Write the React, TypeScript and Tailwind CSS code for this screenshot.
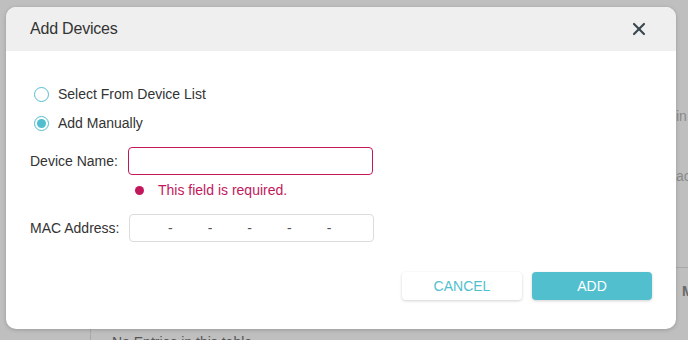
import { X } from "lucide-react";

const font = { fontFamily: '"Liberation Sans", Arial, sans-serif' };

function Radio({ checked, label }: { checked?: boolean; label: string }) {
  return (
    <label className="flex items-center gap-[9px] h-[29px] text-[14px] text-[#333]">
      <span className="w-[15px] h-[15px] rounded-full border border-[#4fbfcf] bg-white flex items-center justify-center">
        {checked && <span className="w-[9px] h-[9px] rounded-full bg-[#4fbfcf]" />}
      </span>
      {label}
    </label>
  );
}

export default function App() {
  return (
    <div className="relative h-[340px] w-[688px] overflow-hidden bg-[#bfbfbf]" style={font}>
      {/* page underneath the overlay */}
      <div className="absolute left-[676px] top-[106px] text-[14px] text-[#8a8a8a]">in</div>
      <div className="absolute left-[676px] top-[166px] text-[14px] text-[#8a8a8a]">ac</div>
      <div className="absolute left-[676px] top-[267px] w-[20px] border-t border-[#a9a9a9]" />
      <div className="absolute left-[682px] top-[281px] text-[14px] font-bold text-[#6a6a6a]">M</div>
      <div className="absolute left-[90px] top-[329px] h-[20px] border-l border-[#a9a9a9]" />
      <div className="absolute left-[112px] top-[332px] text-[14px] text-[#555]">No Entries in this table</div>

      <div className="absolute left-[6px] top-[7px] w-[670px] h-[322px] rounded-[10px] bg-white overflow-hidden shadow-[0_1px_4px_rgba(0,0,0,0.2)]">
        <div className="h-[44px] bg-[#efefef] flex items-center justify-between pl-[24px] pr-[27px]">
          <span className="text-[16px] text-[#333] tracking-[-0.2px]">Add Devices</span>
          <X size={20} strokeWidth={2.6} className="text-[#3a4850]" />
        </div>

        <div className="pl-[24px] pr-[24px] pt-[29px]">
          <div className="pl-[4px]">
            <Radio label="Select From Device List" />
            <Radio checked label="Add Manually" />
          </div>

          <div className="mt-[9px] flex items-center">
            <span className="w-[98px] text-[14px] text-[#333]">Device Name:</span>
            <div className="w-[245px] h-[28px] rounded-[4px] border border-[#c2185b] bg-white" />
          </div>
          <div className="ml-[105px] mt-[5px] flex items-center gap-[14px] text-[14px] text-[#c2185b]">
            <span className="w-[9px] h-[9px] rounded-full bg-[#c2185b]" />
            This field is required.
          </div>

          <div className="mt-[13px] flex items-center">
            <span className="w-[99px] text-[14px] text-[#333]">MAC Address:</span>
            <div className="w-[245px] h-[28px] rounded-[4px] border border-[#dcdcdc] bg-white flex items-center pl-[38px] gap-[35px] text-[14px] text-[#555]">
              <span>-</span>
              <span>-</span>
              <span>-</span>
              <span>-</span>
              <span>-</span>
            </div>
          </div>

          <div className="mt-[30px] flex justify-end gap-[10px]">
            <button className="w-[120px] h-[28px] rounded-[4px] bg-white text-[14px] text-[#52bfcf] shadow-[0_1px_3px_rgba(0,0,0,0.18)]">
              CANCEL
            </button>
            <button className="w-[120px] h-[28px] rounded-[4px] bg-[#52bfcf] text-[14px] text-white shadow-[0_1px_3px_rgba(0,0,0,0.18)]">
              ADD
            </button>
          </div>
        </div>
      </div>
    </div>
  );
}
